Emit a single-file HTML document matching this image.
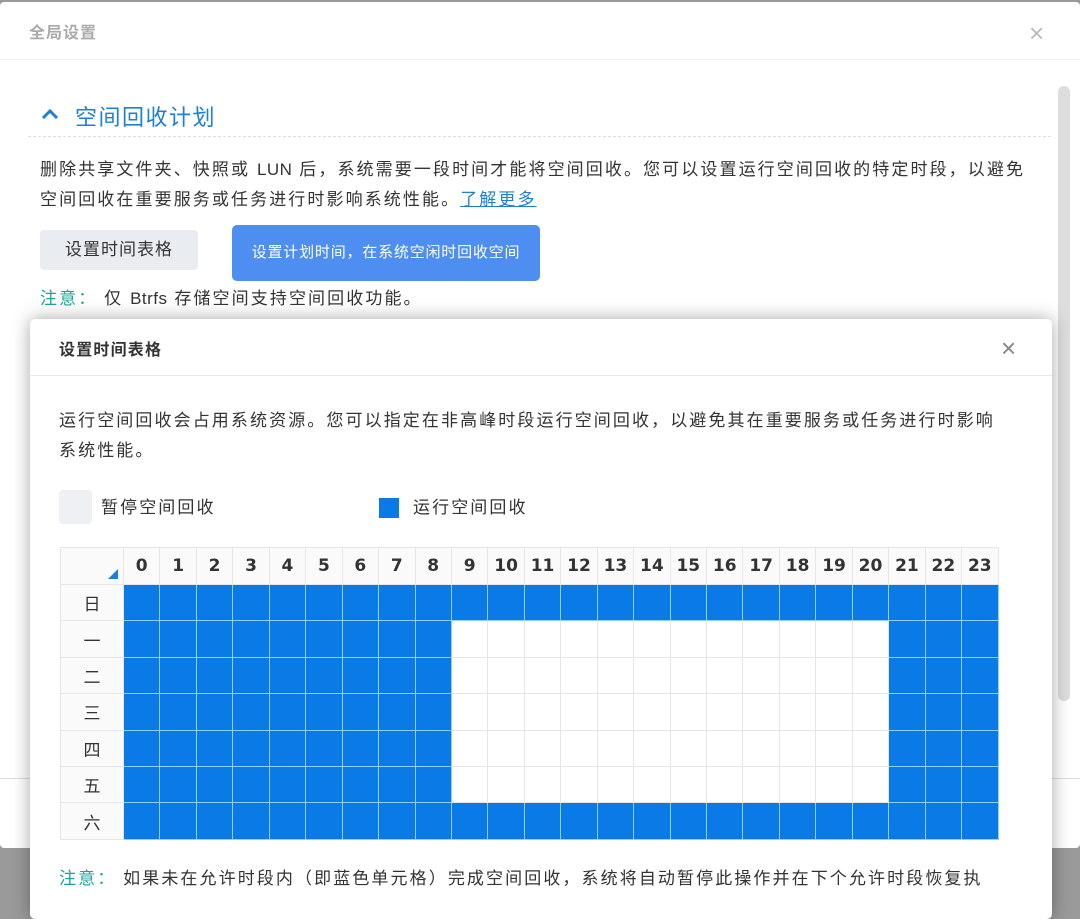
<!DOCTYPE html>
<html><head><meta charset="utf-8">
<style>
*{box-sizing:border-box;margin:0;padding:0}
body{width:1080px;height:899px;overflow:hidden;background:#9a9a9a;font-family:"Liberation Sans","Noto Sans CJK SC",sans-serif;position:relative;color:#333}
.outer{position:absolute;left:0;top:2px;width:1080px;height:846px;background:#fff;border-radius:4px}
.ohead{height:58px;border-bottom:1px solid #eee;position:relative}
.ohead .t{position:absolute;left:29px;top:17px;font-size:16px;color:#aaa;font-weight:bold;letter-spacing:1px}
.x{position:absolute;font-size:26px;color:#bbb;line-height:1}
.sec{position:absolute;left:75px;top:98px;font-size:22px;color:#1d7fd6;letter-spacing:1.5px}
.dash{position:absolute;left:28px;top:134px;width:1023px;border-top:1px dashed #ddd}
.p{position:absolute;left:40px;font-size:17px;color:#333;line-height:30px;letter-spacing:2.1px}
.l{letter-spacing:0.5px}
.btn1{position:absolute;left:40px;top:228px;width:158px;height:40px;background:#e9edf1;border-radius:4px;font-size:17px;text-align:center;line-height:40px;letter-spacing:1px}
.tip{position:absolute;left:232px;top:223px;width:308px;height:56px;background:#4d8ef0;border-radius:5px;color:#fff;font-size:15px;text-align:center;line-height:56px;letter-spacing:0.8px}
.note{color:#1ba59a}
.scroll{position:absolute;left:1058px;top:84px;width:12px;height:615px;background:#ddd;border-radius:6px}
.ofoot{position:absolute;left:0;top:776px;width:1080px;border-top:1px solid #ddd}
.modal{position:absolute;left:30px;top:319px;width:1022px;height:600px;background:#fff;border-radius:5px;box-shadow:0 0 18px rgba(0,0,0,.35)}
.mhead{height:57px;border-bottom:1px solid #e8e8e8;position:relative}
.mhead .t{position:absolute;left:29px;top:17px;font-size:16px;font-weight:bold;color:#333;letter-spacing:1.2px}
.m{position:absolute;left:29px;font-size:17px;line-height:30px;color:#333;letter-spacing:2.1px}
table{position:absolute;left:30px;top:228px;border-collapse:collapse;border:1px solid #e4e4e4}
td{height:36.4px;border:1px solid #e6e6e6;text-align:center;font-size:17px;padding:0}
tr.h td{height:37px;background:#fafafa;font-weight:bold;font-family:"DejaVu Sans","Liberation Sans",sans-serif;font-size:17px}
td.d{width:63px;background:#fafafa;color:#333}
td.b{background:#0a7ae6;border-color:#8fd0ff}
</style></head><body>
<div class="outer">
 <div class="ohead"><div class="t">全局设置</div><div class="x" style="left:1029px;top:18px">×</div></div>
 <svg style="position:absolute;left:41px;top:106px" width="18" height="12" viewBox="0 0 18 12"><path d="M2 10 L9 3 L16 10" fill="none" stroke="#1d7fd6" stroke-width="3"/></svg>
 <div class="sec">空间回收计划</div>
 <div class="dash"></div>
 <div class="p" style="top:153px">删除共享文件夹、快照或 <span class="l">LUN</span> 后，系统需要一段时间才能将空间回收。您可以设置运行空间回收的特定时段，以避免<br>空间回收在重要服务或任务进行时影响系统性能。<span style="color:#1d7fd6;text-decoration:underline">了解更多</span></div>
 <div class="btn1">设置时间表格</div>
 <div class="tip">设置计划时间，在系统空闲时回收空间</div>
 <div class="p" style="top:282px"><span class="note">注意：</span> 仅 <span class="l">Btrfs</span> 存储空间支持空间回收功能。</div>
 <div class="scroll"></div>
 <div class="ofoot"></div>
</div>
<div class="modal">
 <div class="mhead"><div class="t">设置时间表格</div><div class="x" style="left:971px;top:16px;color:#888;font-size:26px">×</div></div>
 <div class="m" style="top:87px">运行空间回收会占用系统资源。您可以指定在非高峰时段运行空间回收，以避免其在重要服务或任务进行时影响<br>系统性能。</div>
 <div style="position:absolute;left:29px;top:171px;width:33px;height:34px;background:#eef0f3;border-radius:4px"></div>
 <div class="m" style="left:71px;top:174px">暂停空间回收</div>
 <div style="position:absolute;left:349px;top:179px;width:20px;height:20px;background:#0a7ae6"></div>
 <div class="m" style="left:383px;top:174px">运行空间回收</div>
 <table id="g">
  <tr class="h"><td class="d" style="position:relative"><span style="position:absolute;right:5px;bottom:5px;width:0;height:0;border-left:10px solid transparent;border-bottom:10px solid #1d7fd6"></span></td><td>0</td><td>1</td><td>2</td><td>3</td><td>4</td><td>5</td><td>6</td><td>7</td><td>8</td><td>9</td><td>10</td><td>11</td><td>12</td><td>13</td><td>14</td><td>15</td><td>16</td><td>17</td><td>18</td><td>19</td><td>20</td><td>21</td><td>22</td><td>23</td></tr>
  <tr><td class="d">日</td></tr>
  <tr><td class="d">一</td></tr>
  <tr><td class="d">二</td></tr>
  <tr><td class="d">三</td></tr>
  <tr><td class="d">四</td></tr>
  <tr><td class="d">五</td></tr>
  <tr><td class="d">六</td></tr>
 </table>
 <div class="m" style="top:545px"><span class="note">注意：</span> 如果未在允许时段内（即蓝色单元格）完成空间回收，系统将自动暂停此操作并在下个允许时段恢复执</div>
</div>
<script>
var rows=document.querySelectorAll('#g tr');
for(var r=1;r<8;r++){for(var h=0;h<24;h++){var td=document.createElement('td');td.style.width='36.45px';
if(r==1||r==7||h<9||h>20)td.className='b';rows[r].appendChild(td);}}
</script>
</body></html>
